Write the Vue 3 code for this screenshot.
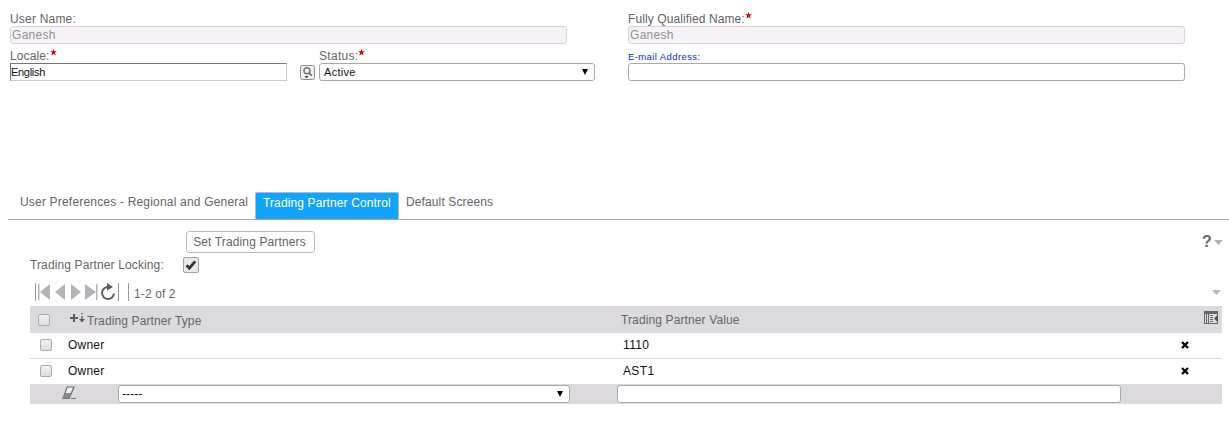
<script setup>
const rows = [
  { type: 'Owner', value: '1110' },
  { type: 'Owner', value: 'AST1' },
]
const star = 'M4 0L5 2.7H8L5.6 4.4L6.5 7.5L4 5.7L1.5 7.5L2.4 4.4L0 2.7H3Z'
</script>

<template>
  <main class="page">
    <section class="form">
      <div class="column">
        <label class="first"><span>User Name:</span></label>
        <div class="field disabled">Ganesh</div>
        <div class="pair">
          <div class="locale">
            <label><span>Locale:</span><svg class="star" viewBox="0 0 8 8"><path :d="star" /></svg></label>
            <div class="sunken">English</div>
          </div>
          <button class="lookup" aria-label="Look up locale">
            <svg width="15" height="15" viewBox="0 0 15 15">
              <rect x=".5" y=".5" width="14" height="14" rx="2" fill="#f1f1f1" stroke="#8c8c8c" />
              <circle cx="7" cy="5.8" r="3" fill="#eee" stroke="#777" stroke-width="1.5" />
              <path d="M9 8l2.7 2.7" stroke="#666" stroke-width="1.7" />
              <path d="M4.5 11h4L6.5 13.5z" fill="#444" />
            </svg>
          </button>
          <div class="status">
            <label><span class="status-label">Status:</span><svg class="star" viewBox="0 0 8 8"><path :d="star" /></svg></label>
            <div class="field select"><span>Active</span><svg class="arrow" width="6" height="6"><path d="M0 0H6L3 6Z" /></svg></div>
          </div>
        </div>
      </div>
      <div class="column">
        <label class="first"><span class="qualified">Fully Qualified Name:</span><svg class="star" viewBox="0 0 8 8"><path :d="star" /></svg></label>
        <div class="field disabled">Ganesh</div>
        <label class="second email">E-mail Address:</label>
        <div class="field"></div>
      </div>
    </section>

    <nav class="tabs">
      <span class="tab prefs">User Preferences - Regional and General</span>
      <span class="tab active">Trading Partner Control</span>
      <span class="tab">Default Screens</span>
    </nav>

    <section class="controls">
      <div class="control-row">
        <button class="set">Set Trading Partners</button>
        <div class="help"><b>?</b><svg width="9" height="5"><path d="M0 0H9L4.5 5Z" fill="#a9b8ad" /></svg></div>
      </div>
      <div class="locking">
        <span>Trading Partner Locking:</span>
        <svg width="16" height="16" viewBox="0 0 16 16">
          <rect x=".5" y=".5" width="15" height="15" rx="1.5" fill="#e9e9e9" stroke="#a3a3a3" />
          <path d="M3.6 8.2L6.3 11.2L12.2 4.3" fill="none" stroke="#333" stroke-width="2.8" />
        </svg>
      </div>
    </section>

    <div class="toolbar">
      <svg width="94" height="18" viewBox="0 0 94 18">
        <g fill="#b4b3bb">
          <path d="M15 1V17L5 9ZM30 1V17L20 9ZM36 1V17L46 9ZM50 1V17L61 9Z" />
          <path d="M3 1h1.5v16H3zM61 1h1.5v16H61z" />
        </g>
        <path d="M.5 0V18M83.5 0V18M93.5 0V18" stroke="#999" />
        <path d="M73 4A6 6 0 1 0 79 10.5" fill="none" stroke="#595a65" stroke-width="2" />
        <path d="M72 0L78 4L72 7.5Z" fill="#595a65" />
      </svg>
      <span class="count">1-2 of 2</span>
      <svg class="more" width="9" height="5"><path d="M0 0H9L4.5 5Z" fill="#b9b5ba" /></svg>
    </div>

    <section class="table">
      <div class="row head">
        <i class="check"></i>
        <svg class="sort" width="16" height="14" viewBox="0 0 16 14">
          <path d="M0 6H8M4 2V10" stroke="#5c5b61" stroke-width="2" />
          <path d="M12 1V2.5M12 4V9" stroke="#5c5b61" stroke-width="1.3" />
          <path d="M9 7H15L12 10.5Z" fill="#5c5b61" />
        </svg>
        <span class="type">Trading Partner Type</span>
        <span class="value">Trading Partner Value</span>
        <svg class="grid-icon" width="14" height="13" viewBox="0 0 14 13">
          <path d="M0 0H14V13H0Z" fill="#69656e" />
          <path d="M1 3H4V12H1ZM5 3H13V12H5Z" fill="#dfdce0" />
          <path d="M2.5 3V12M6 4.5H9M6 6.5H9M6 8.5H9M6 10.5H9" stroke="#69656e" />
          <path d="M14 3.5V11.5L10 7.5Z" fill="#55515a" />
        </svg>
      </div>
      <div v-for="row in rows" :key="row.value" class="row data">
        <i class="check"></i>
        <span class="type">{{ row.type }}</span>
        <span class="value">{{ row.value }}</span>
        <svg class="delete" width="8" height="8" viewBox="0 0 8 8"><path d="M1 1L7 7M7 1L1 7" stroke="#000" stroke-width="2.3" /></svg>
      </div>
      <div class="row entry">
        <svg class="eraser" width="15" height="14" viewBox="0 0 15 14">
          <path d="M5.2 1H12L7.2 12.3H1Z" fill="#eee" stroke="#6d6a70" stroke-width="1.2" />
          <path d="M3 7H9.5L7.2 12.3H1Z" fill="#8b888e" />
          <path d="M9 12.5H14" stroke="#77747a" />
        </svg>
        <div class="field select partner"><span>-----</span><svg class="arrow" width="6" height="6"><path d="M0 0H6L3 6Z" /></svg></div>
        <div class="field new-value"></div>
      </div>
    </section>
  </main>
</template>

<style>
body { margin: 0; background: #fff; }
</style>

<style scoped>
* { box-sizing: border-box; }
svg { display: block; flex: none; }
.page {
  width: 1229px; height: 440px; overflow: hidden; background: #fff;
  font: 12px/14px "Liberation Sans", Arial, sans-serif;
  letter-spacing: .12px; color: #656468; white-space: nowrap;
}
.form { display: grid; grid-template-columns: 557px 557px; column-gap: 61px; padding: 12px 0 0 10px; height: 192px; align-items: start; }
label { display: flex; height: 14px; line-height: 14px; }
.first > span { letter-spacing: .2px; }
.first > .qualified { letter-spacing: .1px; }
.star { width: 7px; height: 7px; margin: 0; fill: #d5000c; }
.field { height: 18px; border: 1px solid #aaa; border-radius: 3px; background: #fff; line-height: 17px; }
.disabled { background: #f6f2f7; border-color: #d5d3d7; color: #929095; padding-left: 1px; letter-spacing: .3px; }
.pair { display: flex; width: 585px; margin-top: 5px; }
.locale { width: 277px; }
.sunken { height: 18px; border: 1px solid #ccc; border-top-color: #777; border-left-color: #777; font-size: 11px; line-height: 17px; letter-spacing: -.3px; color: #111; }
.lookup { margin: 16px 4px 0 13px; width: 15px; height: 15px; padding: 0; border: 0; background: none; }
.status { flex: 1; }
.status-label { letter-spacing: .3px; }
.select { display: flex; justify-content: space-between; align-items: center; padding: 0 6px 0 3px; color: #111; }
.status .select { padding-left: 4px; font-size: 11px; letter-spacing: .3px; }
.status .select span { padding-top: 1px; }
.arrow { fill: #000; }
.second { margin-top: 5px; }
.email { font-size: 9.5px; letter-spacing: .4px; line-height: 15px; color: #0633c8; }
.tabs { display: flex; align-items: flex-start; height: 28px; margin-left: 8px; border-bottom: 1px solid #aaa; }
.tab { padding-top: 3px; height: 27px; }
.prefs { width: 247px; padding-left: 12px; letter-spacing: .19px; }
.active { width: 144px; margin-right: 7px; padding: 3px 0 0 7px; background: #13a3fb; color: #fff; border: 1px solid #b3bac0; border-bottom: 0; border-radius: 2px 2px 0 0; }
.controls { height: 63px; padding-top: 11px; }
.control-row { display: flex; justify-content: space-between; padding: 0 6px 0 186px; }
.set { width: 129px; height: 22px; padding: 0 2px 0 0; border: 1px solid #bbb; border-radius: 3px; background: #fff; color: inherit; font: inherit; letter-spacing: .13px; }
.help { display: flex; align-items: center; gap: 2px; font-size: 16px; }
.locking { display: flex; align-items: center; height: 16px; margin: 4px 0 0 30px; }
.locking span { width: 153px; }
.toolbar { display: flex; align-items: center; height: 23px; padding: 0 8px 5px 35px; }
.count { margin: 4px 0 0 5px; }
.more { margin: 1px 0 0 auto; }
.table { width: 1192px; margin-left: 30px; }
.row { display: flex; align-items: center; }
.head { height: 27px; background: #dddadf; padding-left: 8px; }
.head .type { width: 534px; padding-top: 3px; }
.head .value { width: 583px; padding-top: 1px; }
.grid-icon { margin-bottom: 4px; }
.check { flex: none; width: 12px; height: 12px; border: 1px solid #aaa; border-radius: 2px; background: linear-gradient(#f2f2f2, #ddd); }
.sort { margin: 0 1px 2px 20px; }
.data { height: 25px; padding: 0 0 1px 10px; color: #111; }
.data + .data { height: 26px; border-top: 1px solid #d8d7d9; }
.data .check { margin-right: 16px; }
.data .type { width: 555px; letter-spacing: .2px; }
.data .value { width: 558px; letter-spacing: .35px; }
.entry { height: 20px; padding-left: 32px; background: #dddadf; }
.eraser { margin-right: 41px; margin-bottom: 3px; }
.partner { width: 452px; margin-right: 47px; }
.new-value { width: 504px; }
</style>
